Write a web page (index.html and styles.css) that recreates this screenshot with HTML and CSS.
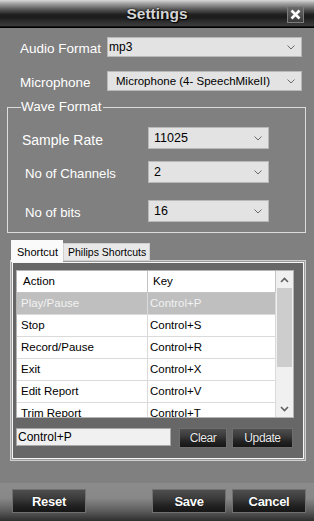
FILE: index.html
```html
<!DOCTYPE html>
<html lang="en">
<head>
    <meta charset="UTF-8">
    <meta name="viewport" content="width=device-width, initial-scale=1.0">
    <title>Settings</title>
    <link rel="stylesheet" href="styles.css">
</head>
<body>
<div class="window">
    <div class="titlebar">
        <span></span>
        <h1 class="title">Settings</h1>
        <button class="close-btn" aria-label="Close">
            <svg width="11" height="11" viewBox="0 0 11 11"><path d="M1.5 1.5 L9.5 9.5 M9.5 1.5 L1.5 9.5" stroke="#fff" stroke-width="2.6"/></svg>
        </button>
    </div>

    <div class="content">
        <div class="field-row">
            <label class="field-label">Audio Format</label>
            <div class="combo combo-top combo-mp3">
                <span>mp3</span>
                <svg class="chev" width="8" height="5" viewBox="0 0 8 5"><path d="M0.5 0.5 L4 4 L7.5 0.5" fill="none" stroke="#6a6a6a" stroke-width="1"/></svg>
            </div>
        </div>
        <div class="field-row field-row-mic">
            <label class="field-label">Microphone</label>
            <div class="combo combo-top combo-mic">
                <span>Microphone (4- SpeechMikeII)</span>
                <svg class="chev" width="8" height="5" viewBox="0 0 8 5"><path d="M0.5 0.5 L4 4 L7.5 0.5" fill="none" stroke="#6a6a6a" stroke-width="1"/></svg>
            </div>
        </div>

        <fieldset class="wave">
            <legend>Wave Format</legend>
            <div class="wave-row">
                <label class="wave-label">Sample Rate</label>
                <div class="combo combo-wave">
                    <span>11025</span>
                    <svg class="chev" width="8" height="5" viewBox="0 0 8 5"><path d="M0.5 0.5 L4 4 L7.5 0.5" fill="none" stroke="#6a6a6a" stroke-width="1"/></svg>
                </div>
            </div>
            <div class="wave-row wave-row-2">
                <label class="wave-label wave-label-in">No of Channels</label>
                <div class="combo combo-wave">
                    <span>2</span>
                    <svg class="chev" width="8" height="5" viewBox="0 0 8 5"><path d="M0.5 0.5 L4 4 L7.5 0.5" fill="none" stroke="#6a6a6a" stroke-width="1"/></svg>
                </div>
            </div>
            <div class="wave-row wave-row-3">
                <label class="wave-label wave-label-in">No of bits</label>
                <div class="combo combo-wave">
                    <span>16</span>
                    <svg class="chev" width="8" height="5" viewBox="0 0 8 5"><path d="M0.5 0.5 L4 4 L7.5 0.5" fill="none" stroke="#6a6a6a" stroke-width="1"/></svg>
                </div>
            </div>
        </fieldset>

        <div class="tabs">
            <div class="tab-strip">
                <div class="tab tab-active">Shortcut</div>
                <div class="tab">Philips Shortcuts</div>
            </div>
            <div class="tab-panel">
                <div class="tab-page">
                    <div class="listview">
                        <div class="list-body">
                            <div class="list-row list-head">
                                <div class="cell head-cell">Action</div>
                                <div class="cell head-cell">Key</div>
                            </div>
                            <div class="list-row selected">
                                <div class="cell">Play/Pause</div>
                                <div class="cell">Control+P</div>
                            </div>
                            <div class="list-row">
                                <div class="cell">Stop</div>
                                <div class="cell">Control+S</div>
                            </div>
                            <div class="list-row">
                                <div class="cell">Record/Pause</div>
                                <div class="cell">Control+R</div>
                            </div>
                            <div class="list-row">
                                <div class="cell">Exit</div>
                                <div class="cell">Control+X</div>
                            </div>
                            <div class="list-row">
                                <div class="cell">Edit Report</div>
                                <div class="cell">Control+V</div>
                            </div>
                            <div class="list-row">
                                <div class="cell">Trim Report</div>
                                <div class="cell">Control+T</div>
                            </div>
                        </div>
                        <div class="scrollbar">
                            <div class="sb-arrow">
                                <svg width="9" height="6" viewBox="0 0 9 6"><path d="M1 5 L4.5 1.5 L8 5" fill="none" stroke="#606060" stroke-width="1.6"/></svg>
                            </div>
                            <div class="sb-track">
                                <div class="sb-thumb"></div>
                            </div>
                            <div class="sb-arrow">
                                <svg width="9" height="6" viewBox="0 0 9 6"><path d="M1 1 L4.5 4.5 L8 1" fill="none" stroke="#606060" stroke-width="1.6"/></svg>
                            </div>
                        </div>
                    </div>
                    <div class="key-row">
                        <div class="key-input">Control+P</div>
                        <button class="dark-btn small-btn btn-clear">Clear</button>
                        <button class="dark-btn small-btn btn-update">Update</button>
                    </div>
                </div>
            </div>
        </div>
    </div>

    <div class="footer">
        <button class="dark-btn big-btn">Reset</button>
        <span class="spacer"></span>
        <button class="dark-btn big-btn">Save</button>
        <button class="dark-btn big-btn">Cancel</button>
    </div>
</div>
</body>
</html>
```

FILE: styles.css
```css
body {
    margin: 0;
    font-family: "Liberation Sans", Arial, sans-serif;
    background-color: #808080;
}
.window {
    width: 314px;
    height: 521px;
    background-color: #808080;
    display: flex;
    flex-direction: column;
    overflow: hidden;
}
.titlebar {
    height: 28px;
    display: grid;
    grid-template-columns: 1fr auto 1fr;
    align-items: center;
    background: linear-gradient(#d8d8d8 0, #a4a4a4 12%, #5c5c5c 32%, #202020 52%, #1c1c1c 62%, #333 82%, #3c3c3c 94%, #000 95%, #000 100%);
}
.title {
    margin: 0;
    font-size: 15.5px;
    font-weight: bold;
    color: #d4d4d4;
    text-shadow: 0 0 2px #000, 1px 1px 1px #000;
    padding-bottom: 1px;
}
.close-btn {
    justify-self: end;
    margin-right: 10px;
    margin-top: 1px;
    width: 17px;
    height: 17px;
    padding: 0;
    border: 1px solid #7c7c7c;
    background: linear-gradient(#6a6a6a, #3a3a3a);
    display: flex;
    align-items: center;
    justify-content: center;
}
.content {
    flex: 1;
}
.field-row {
    display: flex;
    align-items: center;
    height: 20px;
    margin-top: 9px;
    padding-left: 20px;
}
.field-row-mic {
    margin-top: 14px;
}
.field-label {
    width: 87px;
    font-size: 13.5px;
    color: #fff;
    padding-top: 2px;
}
.combo {
    box-sizing: border-box;
    display: flex;
    align-items: center;
    justify-content: space-between;
    background-color: #e3e3e3;
    border: 1px solid #b9b9b9;
    color: #000;
    font-size: 12px;
}
.combo-top {
    width: 195px;
    height: 20px;
    padding: 0 6px 0 1px;
}
.combo-mic {
    padding-left: 8px;
    font-size: 11.5px;
}
.chev {
    display: block;
}
.wave {
    margin: 8px 8px 0 7px;
    padding: 12px 0 10px 14px;
    border: 1px solid #dcdcdc;
}
.wave legend {
    padding: 0 1px 0 0;
    margin-left: -1px;
    font-size: 13.5px;
    line-height: 16px;
    color: #fff;
}
.wave-row {
    display: flex;
    align-items: center;
    height: 22px;
}
.wave-row-2 {
    margin-top: 12px;
}
.wave-row-3 {
    margin-top: 17px;
}
.wave-label {
    width: 126px;
    font-size: 14px;
    color: #fff;
    padding-top: 3px;
}
.wave-label-in {
    width: 123px;
    padding-left: 3px;
    font-size: 13.2px;
}
.combo-wave {
    width: 121px;
    height: 22px;
    padding: 0 6px 0 5px;
    font-size: 12.5px;
}
.tabs {
    margin: 7px 8px 0 10px;
}
.tab-strip {
    display: flex;
    align-items: flex-end;
    height: 20px;
    padding-left: 1px;
}
.tab {
    box-sizing: border-box;
    height: 17px;
    padding: 0 3px 0 4px;
    font-size: 10.5px;
    line-height: 16px;
    background-color: #e8e8e8;
    border: 1px solid #cfcfcf;
    border-bottom: none;
    color: #000;
}
.tab-active {
    position: relative;
    z-index: 1;
    width: 52px;
    height: 22px;
    margin-bottom: -2px;
    padding: 3px 0 0 5px;
    font-size: 11px;
    background-color: #fafafa;
    border-color: #fafafa;
}
.tab-panel {
    border: 1px solid #d0d0d0;
    padding: 1px;
    background-color: #9c9c9c;
}
.tab-page {
    border: 1px solid #f6f6f6;
    background-color: #676767;
    padding: 7px 8px 10px 3px;
}
.listview {
    display: flex;
    width: 278px;
    height: 148px;
    box-sizing: border-box;
    border: 1px solid #b4b4b4;
    background-color: #fff;
    overflow: hidden;
}
.list-body {
    flex: 1;
    overflow: hidden;
}
.list-row {
    display: grid;
    grid-template-columns: 131px 1fr;
    height: 22px;
    box-sizing: border-box;
    border-bottom: 1px solid #dadada;
    font-size: 11.5px;
    color: #000;
}
.cell {
    padding-left: 4px;
    line-height: 21px;
    border-right: 1px solid #dadada;
    white-space: nowrap;
}
.list-row .cell + .cell {
    padding-left: 2px;
}
.list-head {
    height: 22px;
    border-bottom: 1px solid #c4c4c4;
}
.head-cell {
    padding-left: 6px;
    border-right-color: #c4c4c4;
}
.list-head .head-cell + .head-cell {
    padding-left: 5px;
}
.selected {
    background-color: #bfbfbf;
    color: #f2f2f2;
}
.scrollbar {
    width: 17px;
    display: flex;
    flex-direction: column;
    background-color: #f0f0f0;
}
.sb-arrow {
    height: 17px;
    display: flex;
    align-items: center;
    justify-content: center;
}
.sb-track {
    flex: 1;
    padding: 0 1px;
}
.sb-thumb {
    height: 79px;
    background-color: #cdcdcd;
}
.key-row {
    display: flex;
    align-items: flex-start;
    margin-top: 10px;
}
.key-input {
    box-sizing: border-box;
    width: 155px;
    height: 18px;
    border: 1px solid #a8a8a8;
    background-color: #f0f0f0;
    font-size: 12px;
    line-height: 16px;
    padding-left: 1px;
    color: #000;
}
.dark-btn {
    box-sizing: border-box;
    border: 1px solid #6e6e6e;
    background: linear-gradient(#4e4e4e 0, #3a3a3a 40%, #222 70%, #161616 100%);
    color: #fff;
    font-family: "Liberation Sans", Arial, sans-serif;
    padding: 0;
    text-shadow: 0 0 1px #000;
}
.small-btn {
    height: 20px;
    font-size: 12px;
    letter-spacing: -0.4px;
    color: #ececec;
}
.btn-clear {
    width: 48px;
    margin-left: 8px;
}
.btn-update {
    width: 61px;
    margin-left: 5px;
}
.footer {
    height: 38px;
    box-sizing: border-box;
    display: flex;
    align-items: flex-start;
    gap: 6px;
    padding: 6px 8px 0 12px;
    background: linear-gradient(#8c8c8c 0, #888 40%, #5e5e5e 72%, #2e2e2e 100%);
}
.spacer {
    flex: 1;
}
.big-btn {
    width: 74px;
    height: 24px;
    font-size: 13px;
    font-weight: bold;
    letter-spacing: -0.3px;
    border-color: #707070;
}
```
